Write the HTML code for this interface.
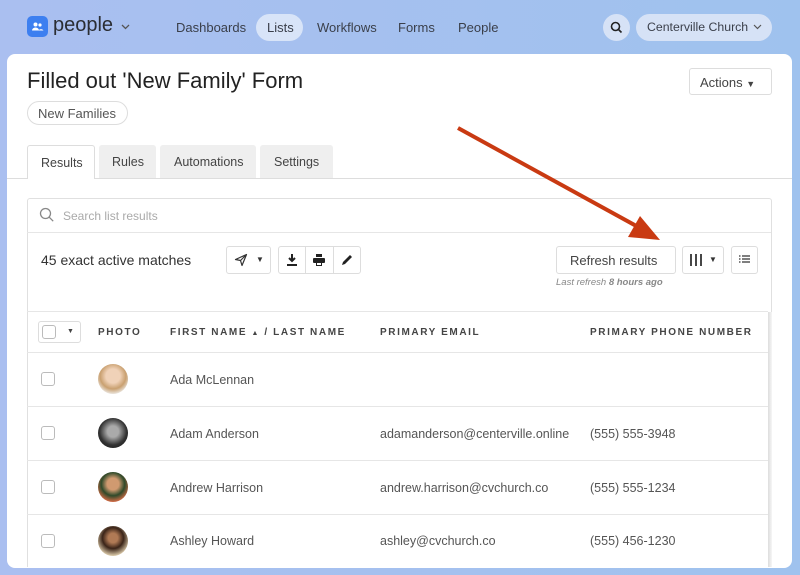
<!DOCTYPE html>
<html><head><style>
*{box-sizing:border-box;margin:0;padding:0}
body{width:800px;height:575px;overflow:hidden;font-family:"Liberation Sans",sans-serif;background:linear-gradient(90deg,#aabff0,#9fc2ee);position:relative;color:#333}
.abs{position:absolute;white-space:nowrap}
.nav{font-size:13px;color:#3a3f4a}
.card{left:7px;top:54px;width:785px;height:514px;background:#fff;border-radius:8px;overflow:hidden}
.btn{position:absolute;border:1px solid #ddd;border-radius:3px;background:#fff;white-space:nowrap}
.th{position:absolute;top:327px;font-size:10px;font-weight:bold;letter-spacing:1.6px;color:#444;white-space:nowrap}
.cb{position:absolute;width:14px;height:14px;border:1px solid #bbb;border-radius:3px;background:#fff}
.av{position:absolute;left:98px;width:30px;height:30px;border-radius:50%}
.td{position:absolute;font-size:12.5px;color:#555;white-space:nowrap}
.hl{position:absolute;left:27px;width:741px;height:1px;background:#e6e6e6}
</style></head><body>
<div class="abs" style="left:27px;top:16px;width:21px;height:21px;border-radius:5px;background:#3d7ff0"></div>
<svg class="abs" style="left:30px;top:19px" width="15" height="15" viewBox="0 0 15 15"><circle cx="5.5" cy="5.5" r="2" fill="#fff"/><circle cx="10" cy="6" r="1.6" fill="#fff"/><path d="M2 11.5a3.5 3 0 0 1 7 0z M8.5 11.5a2.8 2.5 0 0 1 5 0z" fill="#fff"/></svg>
<div class="abs" style="left:53px;top:14px;font-size:20px;color:#2a2d33;font-weight:500">people</div>
<svg class="abs" style="left:121px;top:24px" width="9" height="6" viewBox="0 0 9 6"><path d="M1 1l3.5 3.5L8 1" stroke="#555" stroke-width="1.3" fill="none"/></svg>
<div class="abs nav" style="left:176px;top:20px">Dashboards</div>
<div class="abs" style="left:256px;top:14px;width:47px;height:27px;border-radius:14px;background:#d8e4f8"></div>
<div class="abs nav" style="left:267px;top:20px">Lists</div>
<div class="abs nav" style="left:317px;top:20px">Workflows</div>
<div class="abs nav" style="left:398px;top:20px">Forms</div>
<div class="abs nav" style="left:458px;top:20px">People</div>
<div class="abs" style="left:603px;top:14px;width:27px;height:27px;border-radius:50%;background:#d6e2f6"></div>
<svg class="abs" style="left:610px;top:21px" width="13" height="13" viewBox="0 0 13 13"><circle cx="5.5" cy="5.5" r="4" fill="none" stroke="#222" stroke-width="1.6"/><path d="M8.5 8.5l3 3" stroke="#222" stroke-width="1.6"/></svg>
<div class="abs" style="left:636px;top:14px;width:136px;height:27px;border-radius:14px;background:#d6e2f6"></div>
<div class="abs nav" style="left:647px;top:20px;font-size:12.3px">Centerville Church</div>
<svg class="abs" style="left:753px;top:24px" width="9" height="6" viewBox="0 0 9 6"><path d="M1 1l3.5 3.5L8 1" stroke="#555" stroke-width="1.2" fill="none"/></svg>

<div class="abs card"></div>
<div class="abs" style="left:27px;top:68px;font-size:22px;color:#222">Filled out 'New Family' Form</div>
<div class="abs" style="left:27px;top:101px;width:101px;height:24px;border:1px solid #ddd;border-radius:12px;font-size:13px;color:#555;padding:4px 10px">New Families</div>
<div class="btn" style="left:689px;top:68px;width:83px;height:27px;font-size:13px;color:#444;padding:6px 10px">Actions <span style="font-size:9px">&#9660;</span></div>

<div class="abs" style="left:7px;top:178px;width:785px;height:1px;background:#ddd"></div>
<div class="abs" style="left:27px;top:145px;width:68px;height:34px;border:1px solid #ddd;border-bottom:none;border-radius:3px 3px 0 0;background:#fff;font-size:12.5px;color:#444;padding:10px 13px">Results</div>
<div class="abs" style="left:99px;top:145px;width:57px;height:33px;background:#efefef;border-radius:3px 3px 0 0;font-size:12.5px;color:#444;padding:10px 13px">Rules</div>
<div class="abs" style="left:160px;top:145px;width:96px;height:33px;background:#efefef;border-radius:3px 3px 0 0;font-size:12.5px;color:#444;padding:10px 14px">Automations</div>
<div class="abs" style="left:260px;top:145px;width:73px;height:33px;background:#efefef;border-radius:3px 3px 0 0;font-size:12.5px;color:#444;padding:10px 14px">Settings</div>

<div class="abs" style="left:27px;top:198px;width:745px;height:369px;border:1px solid #e0e0e0;border-bottom:none;border-radius:3px 3px 0 0;background:#fff"></div>
<svg class="abs" style="left:39px;top:207px" width="16" height="16" viewBox="0 0 16 16"><circle cx="6.5" cy="6.5" r="5" fill="none" stroke="#888" stroke-width="1.3"/><path d="M10.2 10.2l4 4" stroke="#888" stroke-width="1.3"/></svg>
<div class="abs" style="left:63px;top:209px;font-size:12px;color:#aaa">Search list results</div>
<div class="hl" style="top:232px;width:744px"></div>
<div class="abs" style="left:41px;top:252px;font-size:14px;color:#333">45 exact active matches</div>
<div class="btn" style="left:226px;top:246px;width:45px;height:28px"></div>
<svg class="abs" style="left:234px;top:253px" width="14" height="14" viewBox="0 0 14 14"><path d="M1.5 6.5L12.5 1.5 8 12.5 6.5 7.5z M6.5 7.5L12.5 1.5" stroke="#333" stroke-width="1.2" fill="none" stroke-linejoin="round"/></svg>
<div class="abs" style="left:256px;top:255px;font-size:8px;color:#333">&#9660;</div>
<div class="btn" style="left:278px;top:246px;width:83px;height:28px"></div>
<div class="abs" style="left:305px;top:246px;width:1px;height:28px;background:#ddd"></div>
<div class="abs" style="left:333px;top:246px;width:1px;height:28px;background:#ddd"></div>
<svg class="abs" style="left:285px;top:253px" width="14" height="14" viewBox="0 0 14 14"><path d="M7 1v7M4 5l3 3 3-3" stroke="#222" stroke-width="2" fill="none"/><path d="M2 12h10" stroke="#222" stroke-width="2"/></svg>
<svg class="abs" style="left:312px;top:253px" width="14" height="14" viewBox="0 0 14 14"><rect x="4" y="1" width="6" height="3" fill="#222"/><rect x="1" y="5" width="12" height="5" rx="1" fill="#222"/><rect x="4" y="9" width="6" height="4" fill="#222"/><rect x="5" y="10" width="4" height="2" fill="#fff"/></svg>
<svg class="abs" style="left:340px;top:253px" width="14" height="14" viewBox="0 0 14 14"><path d="M2 12l1-3 7-7 2 2-7 7z" fill="#222"/></svg>
<div class="btn" style="left:556px;top:246px;width:120px;height:28px;font-size:13px;color:#444;padding:6px 13px">Refresh results</div>
<div class="btn" style="left:682px;top:246px;width:42px;height:28px"></div>
<svg class="abs" style="left:689px;top:253px" width="14" height="14" viewBox="0 0 14 14"><path d="M2 1v12M7 1v12M12 1v12" stroke="#333" stroke-width="1.8"/></svg>
<div class="abs" style="left:709px;top:255px;font-size:8px;color:#333">&#9660;</div>
<div class="btn" style="left:731px;top:246px;width:27px;height:28px"></div>
<svg class="abs" style="left:738px;top:254px" width="13" height="12" viewBox="0 0 13 12"><path d="M1 2h1.5M4 2h8M1 5h1.5M4 5h8M1 8h1.5M4 8h8" stroke="#333" stroke-width="1.3"/></svg>
<div class="abs" style="left:556px;top:277px;font-size:9.5px;color:#888;font-style:italic">Last refresh <b>8 hours ago</b></div>

<div class="hl" style="top:311px"></div>
<div class="btn" style="left:38px;top:321px;width:43px;height:22px"></div>
<div class="cb" style="left:42px;top:325px"></div>
<div class="abs" style="left:67px;top:328px;font-size:7px;color:#444">&#9660;</div>
<div class="th" style="left:98px">PHOTO</div>
<div class="th" style="left:170px">FIRST NAME <span style="font-size:7px">&#9650;</span> / LAST NAME</div>
<div class="th" style="left:380px">PRIMARY EMAIL</div>
<div class="th" style="left:590px">PRIMARY PHONE NUMBER</div>
<div class="hl" style="top:352px"></div>
<div class="hl" style="top:406px"></div>
<div class="hl" style="top:460px"></div>
<div class="hl" style="top:514px"></div>
<div class="abs" style="left:768px;top:312px;width:4px;height:255px;background:linear-gradient(90deg,#ddd,#f6f6f6)"></div>

<div class="cb" style="left:41px;top:372px"></div>
<div class="av" style="top:364px;background:radial-gradient(circle at 50% 40%,#f0d2b8 30%,#c9a070 55%,#e8e0d6 75%)"></div>
<div class="td" style="left:170px;top:373px">Ada McLennan</div>

<div class="cb" style="left:41px;top:426px"></div>
<div class="av" style="top:418px;background:radial-gradient(circle at 50% 45%,#aaa 25%,#333 60%,#111)"></div>
<div class="td" style="left:170px;top:427px">Adam Anderson</div>
<div class="td" style="left:380px;top:427px">adamanderson@centerville.online</div>
<div class="td" style="left:590px;top:427px">(555) 555-3948</div>

<div class="cb" style="left:41px;top:480px"></div>
<div class="av" style="top:472px;background:radial-gradient(circle at 50% 40%,#d09a70 25%,#2f4a2a 50%,#e8704a 80%)"></div>
<div class="td" style="left:170px;top:481px">Andrew Harrison</div>
<div class="td" style="left:380px;top:481px">andrew.harrison@cvchurch.co</div>
<div class="td" style="left:590px;top:481px">(555) 555-1234</div>

<div class="cb" style="left:41px;top:534px"></div>
<div class="av" style="top:526px;background:radial-gradient(circle at 50% 40%,#b07a55 20%,#3a2418 45%,#d9c8a8 75%)"></div>
<div class="td" style="left:170px;top:534px">Ashley Howard</div>
<div class="td" style="left:380px;top:534px">ashley@cvchurch.co</div>
<div class="td" style="left:590px;top:534px">(555) 456-1230</div>

<svg class="abs" style="left:0;top:0" width="800" height="575"><line x1="458" y1="128" x2="640" y2="228" stroke="#c93a12" stroke-width="4"/><polygon points="660,240 628,237 640,216" fill="#c93a12"/></svg>
</body></html>
